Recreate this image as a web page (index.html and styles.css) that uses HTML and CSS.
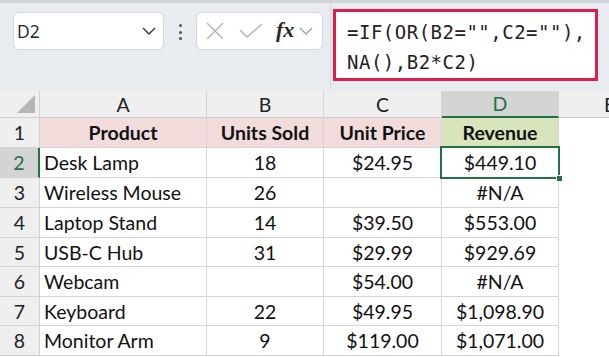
FILE: index.html
```html
<!DOCTYPE html>
<html>
<head>
<meta charset="utf-8">
<link rel="stylesheet" href="styles.css">
</head>
<body>
<div class="toolbar">
  <div class="namebox">
    <span class="nb-text">D2</span>
    <svg class="nb-chev" width="14" height="8" viewBox="0 0 14 8"><path d="M1 1 L7 7 L13 1" fill="none" stroke="#333" stroke-width="1.4"/></svg>
  </div>
  <div class="dots"><span></span><span></span><span></span></div>
  <div class="fxbox">
    <svg width="18" height="18" viewBox="0 0 18 18"><path d="M1 1 L17 17 M17 1 L1 17" stroke="#b5b5b5" stroke-width="1.5" fill="none"/></svg>
    <svg width="24" height="16" viewBox="0 0 24 16"><path d="M1 7 L8 14 L23 1" stroke="#b5b5b5" stroke-width="1.5" fill="none"/></svg>
    <span class="fx">fx</span>
    <svg class="fx-chev" width="14" height="8" viewBox="0 0 14 8"><path d="M1 1 L7 7 L13 1" fill="none" stroke="#a0a0a0" stroke-width="1.3"/></svg>
  </div>
  <div class="formula-area">
    <div class="formula">=IF(OR(B2="",C2=""),<br>NA(),B2*C2)</div>
  </div>
</div>
<div class="sheet">
  <div class="ch corner"><span class="tri"></span></div>
  <div class="ch">A</div>
  <div class="ch">B</div>
  <div class="ch">C</div>
  <div class="ch sel">D</div>
  <div class="ch e">E</div>

  <div class="rh">1</div>
  <div class="c hd pink">Product</div>
  <div class="c hd pink ctr">Units Sold</div>
  <div class="c hd pink ctr">Unit Price</div>
  <div class="c hd green ctr">Revenue</div>
  <div class="blank"></div>

  <div class="rh selr">2</div>
  <div class="c">Desk Lamp</div>
  <div class="c ctr">18</div>
  <div class="c ctr">$24.95</div>
  <div class="c ctr active">$449.10<span class="handle"></span></div>
  <div class="blank"></div>

  <div class="rh">3</div>
  <div class="c">Wireless Mouse</div>
  <div class="c ctr">26</div>
  <div class="c ctr"></div>
  <div class="c ctr">#N/A</div>
  <div class="blank"></div>

  <div class="rh">4</div>
  <div class="c">Laptop Stand</div>
  <div class="c ctr">14</div>
  <div class="c ctr">$39.50</div>
  <div class="c ctr">$553.00</div>
  <div class="blank"></div>

  <div class="rh">5</div>
  <div class="c">USB-C Hub</div>
  <div class="c ctr">31</div>
  <div class="c ctr">$29.99</div>
  <div class="c ctr">$929.69</div>
  <div class="blank"></div>

  <div class="rh">6</div>
  <div class="c">Webcam</div>
  <div class="c ctr"></div>
  <div class="c ctr">$54.00</div>
  <div class="c ctr">#N/A</div>
  <div class="blank"></div>

  <div class="rh">7</div>
  <div class="c">Keyboard</div>
  <div class="c ctr">22</div>
  <div class="c ctr">$49.95</div>
  <div class="c ctr">$1,098.90</div>
  <div class="blank"></div>

  <div class="rh">8</div>
  <div class="c">Monitor Arm</div>
  <div class="c ctr">9</div>
  <div class="c ctr">$119.00</div>
  <div class="c ctr">$1,071.00</div>
  <div class="blank"></div>
</div>
</body>
</html>
```
FILE: styles.css
```css
* { box-sizing: border-box; }
html, body { margin: 0; padding: 0; }
body {
  width: 609px;
  height: 357px;
  overflow: hidden;
  background: #fff;
  font-family: Lato, "Liberation Sans", sans-serif;
}
.toolbar {
  height: 91px;
  background: #e8ebef;
  display: flex;
  align-items: flex-start;
  border-top: 3px solid #cfd3d8;
  position: relative;
}
.namebox {
  margin: 9px 0 0 13px;
  width: 151px;
  height: 38px;
  background: #fff;
  border: 1px solid #d3d6da;
  border-radius: 6px;
  display: flex;
  align-items: center;
  justify-content: space-between;
  padding: 0 7px 0 3px;
}
.nb-text {
  font-family: "Open Sans", "Liberation Sans", sans-serif;
  font-size: 17.5px;
  color: #222;
}
.dots {
  width: 32px;
  margin-top: 21px;
  display: flex;
  flex-direction: column;
  align-items: center;
  gap: 3.5px;
}
.dots span {
  width: 3px; height: 3px; background: #555; border-radius: 50%;
}
.fxbox {
  margin-top: 9px;
  width: 127px;
  height: 38px;
  background: #fff;
  border: 1px solid #d3d6da;
  border-radius: 6px;
  display: flex;
  align-items: center;
  padding-left: 9px;
}
.fxbox svg:nth-child(1) { margin-right: 15px; }
.fxbox svg:nth-child(2) { margin-right: 13px; }
.fx {
  font-family: "Liberation Serif", "DejaVu Serif", serif;
  font-style: italic;
  font-weight: bold;
  font-size: 22px;
  color: #2a2a2a;
  margin-right: 5px;
  margin-top: -2px;
}
.formula-area {
  margin-left: 7px;
  border-left: 1px solid #d6d9dd;
  height: 88px;
  padding: 6px 0 0 2px;
}
.formula {
  width: 265px;
  height: 72px;
  background: #fff;
  border: 3px solid #e01e4b;
  padding: 5px 0 0 11px;
  font-family: "DejaVu Sans Mono", "Liberation Mono", monospace;
  font-size: 19px;
  line-height: 30px;
  letter-spacing: 0.5px;
  color: #222;
  white-space: nowrap;
}
.sheet {
  display: grid;
  grid-template-columns: 40px 167px 117px 118px 117px 50px;
  grid-template-rows: 27px 30px 30px 30px 30px 29px 30px 29px 30px;
  font-size: 19.5px;
  color: #111;
}
.ch {
  background: #efefef;
  border-right: 1px solid #d3d3d3;
  border-bottom: 1px solid #cfcfcf;
  display: flex;
  align-items: center;
  justify-content: center;
  color: #222;
}
.ch.e { justify-content: flex-start; padding-left: 45px; border-right: none; }
.ch.sel {
  background: #d4d4d4;
  color: #217346;
  border-bottom: 2px solid #217346;
}
.corner { position: relative; }
.tri {
  position: absolute;
  right: 4px;
  bottom: 4px;
  width: 0; height: 0;
  border-left: 18px solid transparent;
  border-bottom: 18px solid #b5b5b5;
}
.rh {
  background: #efefef;
  border-right: 1px solid #cfcfcf;
  border-bottom: 1px solid #d3d3d3;
  display: flex;
  align-items: center;
  justify-content: center;
  color: #222;
}
.rh.selr {
  background: #d4d4d4;
  color: #217346;
  border-right: 2px solid #217346;
}
.c {
  border-right: 1px solid #d4d4d4;
  border-bottom: 1px solid #d4d4d4;
  display: flex;
  align-items: center;
  padding-left: 4px;
  white-space: nowrap;
}
.c.ctr { justify-content: center; padding-left: 0; }
.c.hd { font-weight: bold; }
.c.hd:not(.ctr) { justify-content: center; padding-left: 0; }
.pink { background: #f2dcdb; }
.green { background: #d8e4bc; }
.blank { background: #fff; }
.active { position: relative; }
.active::after {
  content: "";
  position: absolute;
  left: -2px; top: -2px; right: -2px; bottom: -2px;
  border: 2px solid #217346;
}
.handle {
  position: absolute;
  right: -5px;
  bottom: -5px;
  width: 7px;
  height: 7px;
  background: #217346;
  border: 1px solid #fff;
  z-index: 2;
}
```
